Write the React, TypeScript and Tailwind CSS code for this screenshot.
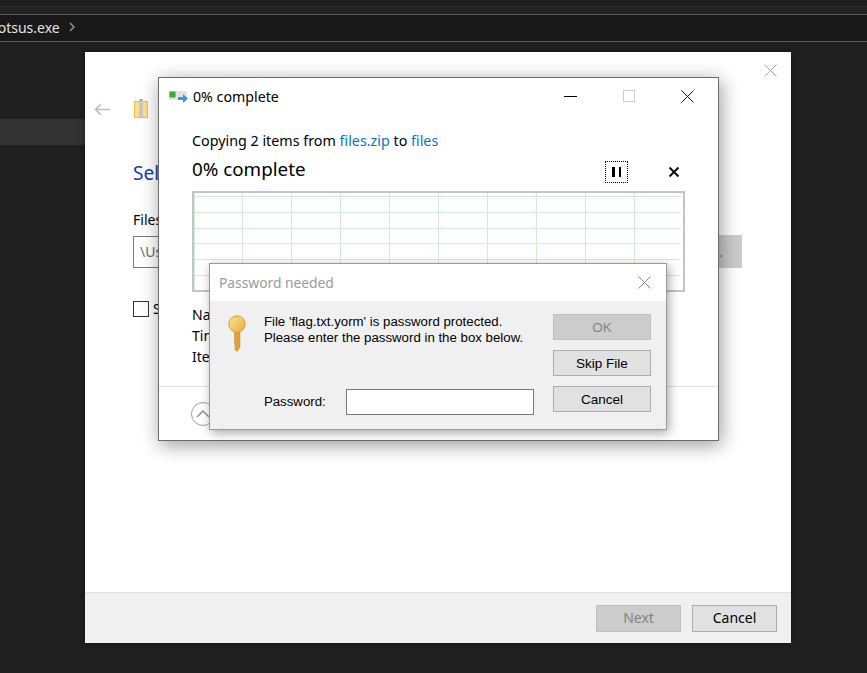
const segoe = "font-['Noto_Sans','Open_Sans',sans-serif]";

const GridChart = () => {
  const columns = [0, 1, 2, 3, 4, 5, 6, 7, 8, 9];
  const rows = [0, 1, 2, 3, 4, 5];
  return (
    <svg width="489" height="97" className="block">
      <line x1="0.5" y1="0" x2="0.5" y2="97" stroke="#cdeed4" />
      {columns.map((c) => (
        <line key={c} x1={c * 49 - 0.5} y1="0" x2={c * 49 - 0.5} y2="97" stroke="#cdeed4" />
      ))}
      {rows.map((r) => (
        <line key={r} x1="0" y1={Math.round(r * 15.8) + 3.5} x2="487" y2={Math.round(r * 15.8) + 3.5} stroke="#cdeed4" />
      ))}
    </svg>
  );
};

const ZipIcon = () => (
  <svg width="15" height="20" viewBox="0 0 15 20" className="block">
    <rect x="0.5" y="2.5" width="13" height="16" fill="#fbe08c" stroke="#e6c14e" />
    <rect x="5.5" y="0" width="3" height="16" fill="#a3a3a3" />
    <path d="M5.5 3h3M5.5 5h3M5.5 7h3M5.5 9h3M5.5 11h3M5.5 13h3" stroke="#ececec" />
    <rect x="5" y="14" width="4" height="4" fill="#c9c9c9" />
  </svg>
);

const CopyIcon = () => (
  <svg width="20" height="15" viewBox="0 0 20 15" className="block">
    <rect x="0" y="1" width="18" height="9" fill="#e3e3e3" />
    <rect x="0.5" y="1.5" width="6" height="6" fill="#2fae3a" />
    <path d="M9 7h5V4l5 4.5-5 4.5v-3H9z" fill="#3d94e0" />
  </svg>
);

const KeyIcon = () => (
  <svg width="18" height="37" viewBox="0 0 18 37" className="block">
    <defs>
      <linearGradient id="keyGold" x1="0" y1="0" x2="1" y2="1">
        <stop offset="0" stopColor="#fde793" />
        <stop offset="1" stopColor="#e8ab36" />
      </linearGradient>
    </defs>
    <path d="M6.5 15h5.5v17l-3 4.5-2.5-2.5 1-2-1-1.5 1-1.5-1-1z" fill="#e0a238" stroke="#c08528" strokeWidth="0.5" />
    <circle cx="9" cy="9" r="8.2" fill="url(#keyGold)" stroke="#d89d33" />
    <ellipse cx="8" cy="4.5" rx="2" ry="1.5" fill="#fff3c4" stroke="#c99330" strokeWidth="0.5" />
  </svg>
);

const CrossIcon = ({ size, color, width = 1 }: { size: number; color: string; width?: number }) => (
  <svg width={size} height={size} viewBox={`0 0 ${size} ${size}`} className="block">
    <path d={`M0.5 0.5L${size - 0.5} ${size - 0.5}M${size - 0.5} 0.5L0.5 ${size - 0.5}`} stroke={color} strokeWidth={width} />
  </svg>
);

const DialogButton = ({ label, disabled }: { label: string; disabled?: boolean }) => (
  <div
    className={`flex h-[26px] w-[98px] items-center justify-center border pt-[2px] text-[13.5px] leading-none ${
      disabled ? 'border-[#bfbfbf] bg-[#cccccc] text-[#838383]' : 'border-[#adadad] bg-[#e1e1e1] text-black'
    }`}
  >
    {label}
  </div>
);

const PasswordDialog = () => (
  <div className="absolute left-[209px] top-[263px] flex h-[167px] w-[458px] flex-col border border-[#9a9a9a] bg-[#f0f0f0] font-['Liberation_Sans',Arial,sans-serif] text-black shadow-[2px_3px_10px_rgba(0,0,0,0.35)]">
    <div className="flex h-[37px] items-center justify-between bg-white pl-[9px] pr-[15px]">
      <span className={`${segoe} pt-[2px] text-[13.8px] text-[#9b9b9b]`}>Password needed</span>
      <CrossIcon size={13} color="#8a8a8a" />
    </div>
    <div className="flex flex-1 pl-[18px] pr-[15px] pt-[13px]">
      <div className="w-[36px] pt-[1px]">
        <KeyIcon />
      </div>
      <div className="flex w-[289px] flex-col pl-[2px]">
        <p className="text-[13.25px] leading-[16px]">
          File 'flag.txt.yorm' is password protected.
          <br />
          Please enter the password in the box below.
        </p>
        <div className="mt-[43px] flex items-center">
          <span className="w-[82px] text-[13.25px]">Password:</span>
          <div className="h-[26px] w-[188px] border border-[#7a7a7a] bg-white" />
        </div>
      </div>
      <div className="ml-[-19px] flex flex-col gap-[10px] pl-[38px]">
        <DialogButton label="OK" disabled />
        <DialogButton label="Skip File" />
        <DialogButton label="Cancel" />
      </div>
    </div>
  </div>
);

const ProgressWindow = () => (
  <div className={`absolute left-[158px] top-[77px] flex h-[364px] w-[561px] flex-col border border-[#6b6b6b] bg-white shadow-[2px_4px_18px_rgba(0,0,0,0.4)] ${segoe}`}>
    <div className="flex h-[38px] items-center pl-[10px]">
      <CopyIcon />
      <span className="ml-[4px] text-[14.2px] text-black">0% complete</span>
      <div className="mb-[2px] ml-auto mr-[24px] flex items-center gap-[46px]">
        <div className="h-px w-[13px] bg-black" />
        <div className="h-[12px] w-[12px] border border-[#cccccc]" />
        <CrossIcon size={13} color="#111111" />
      </div>
    </div>
    <div className="flex flex-col pl-[33px] pt-[15px]">
      <p className="text-[14.3px] leading-[20px] text-black">
        Copying 2 items from <span className="text-[#0a74c9]">files.zip</span> to{' '}
        <span className="text-[#0a74c9]">files</span>
      </p>
      <div className="mt-[4px] flex h-[28px] items-center">
        <span className="text-[18.8px] text-black">0% complete</span>
        <div className="ml-auto mr-[39px] mt-[5px] flex items-center gap-[41px]">
          <div className="flex h-[22px] w-[23px] items-center justify-center gap-[4px] border border-dotted border-black">
            <div className="h-[10px] w-[2.5px] bg-black" />
            <div className="h-[10px] w-[2.5px] bg-black" />
          </div>
          <CrossIcon size={10} color="#111111" width={2} />
        </div>
      </div>
      <div className="mt-[8px] h-[101px] w-[493px] border-2 border-[#c4c4c4]">
        <GridChart />
      </div>
      <div className="mt-[12px] flex flex-col text-[14px] leading-[21px] text-black">
        <span>Name</span>
        <span>Time</span>
        <span>Items</span>
      </div>
    </div>
    <div className="mt-[19px] flex flex-1 items-center border-t border-[#dfdfdf] pl-[32px]">
      <div className="flex h-[24px] w-[24px] items-center justify-center rounded-full border border-[#a0a0a0]">
        <svg width="14" height="8" viewBox="0 0 14 8">
          <path d="M1 7l6-6 6 6" fill="none" stroke="#909090" strokeWidth="1.5" />
        </svg>
      </div>
    </div>
  </div>
);

const WizardWindow = () => (
  <div className={`absolute left-[85px] top-[52px] flex h-[591px] w-[706px] flex-col bg-white shadow-[0_0_6px_rgba(0,0,0,0.5)] ${segoe}`}>
    <div className="flex justify-end pr-[14px] pt-[12px]">
      <CrossIcon size={13} color="#a3a3a3" />
    </div>
    <div className="mt-[22px] flex items-center pl-[9px]">
      <svg width="16" height="13" viewBox="0 0 16 13">
        <path d="M7 1L1.5 6.5 7 12M1.5 6.5H16" fill="none" stroke="#bdbdbd" strokeWidth="1.6" />
      </svg>
      <div className="ml-[24px]">
        <ZipIcon />
      </div>
    </div>
    <span className="ml-[48px] mt-[41px] text-[19px] leading-[26px] text-[#0c3ea6]">Select</span>
    <span className="ml-[48px] mt-[24px] text-[14px] leading-[20px] text-black">Files</span>
    <div className="mt-[5px] flex items-center">
      <div className="ml-[48px] flex h-[32px] w-[560px] items-center border border-[#7a7a7a] pl-[6px] text-[14px] text-[#6e6e6e]">
        \Users
      </div>
      <div className="flex h-[33px] w-[49px] items-center justify-center bg-[#cccccc] text-[14px] text-[#838383]">...</div>
    </div>
    <div className="ml-[48px] mt-[30px] flex items-center">
      <div className="h-[16px] w-[16px] border border-[#333333]" />
      <span className="ml-[4px] text-[14px] text-black">Show</span>
    </div>
    <div className="mt-auto flex h-[51px] items-center justify-end gap-[11px] border-t border-[#dfdfdf] bg-[#f0f0f0] pr-[14px]">
      <div className="flex h-[27px] w-[85px] items-center justify-center border border-[#bfbfbf] bg-[#cccccc] pb-[2px] text-[14px] text-[#838383]">
        Next
      </div>
      <div className="flex h-[27px] w-[85px] items-center justify-center border border-[#adadad] bg-[#e1e1e1] pb-[2px] text-[14px] text-black">
        Cancel
      </div>
    </div>
  </div>
);

export default function App() {
  return (
    <div className={`relative h-[673px] w-[867px] overflow-hidden bg-[#202020] ${segoe}`}>
      {/* Explorer behind the dialogs */}
      <div className="h-[7px] border-b border-[#2b2b2b] bg-[#1f1f1f]" />
      <div className="h-[7px] bg-[#232323]" />
      <div className="flex h-[28px] items-center gap-[9px] border-y border-[#5a5a5a] bg-[#191919] pb-[2px] text-[14px] text-[#e4e4e4]">
        <span className="ml-[-11px]">Rotsus.exe</span>
        <svg width="7" height="10" viewBox="0 0 7 10">
          <path d="M1 1l4 4-4 4" fill="none" stroke="#9a9a9a" strokeWidth="1.4" />
        </svg>
      </div>
      <div className="mt-[77px] h-[26px] w-[85px] bg-[#333333]" />

      <WizardWindow />
      <ProgressWindow />
      <PasswordDialog />
    </div>
  );
}
